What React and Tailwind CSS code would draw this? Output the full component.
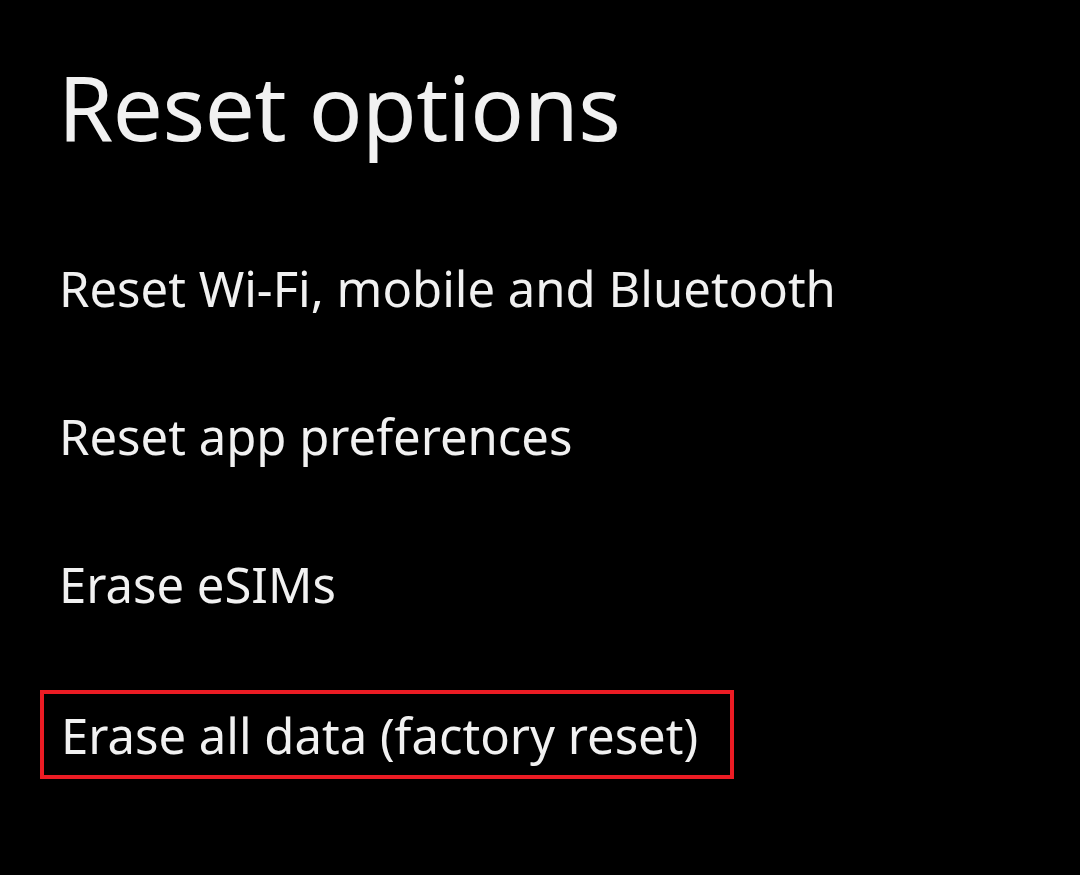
import React from 'react'

const items = [
  'Reset Wi-Fi, mobile and Bluetooth',
  'Reset app preferences',
  'Erase eSIMs',
]

export default function App() {
  return (
    <div className="w-[1080px] h-[875px] bg-black text-[#f1f1f1] font-['Noto_Sans',sans-serif] overflow-hidden">
      <h1 className="pl-[58px] pt-[52px] text-[89px] leading-[110px] font-normal tracking-[-0.5px]">Reset options</h1>
      <div className="mt-[96px] flex flex-col">
        {items.map(t => (
          <div key={t} className="h-[148px] pl-[59px] text-[49px] leading-[60px] font-normal">
            {t}
          </div>
        ))}
        <div className="-mt-[12px] ml-[40px] w-[694px] h-[89px] border-4 border-[#ec1c24] pl-[17px] flex items-center text-[49px] leading-[60px] font-normal">
          Erase all data (factory reset)
        </div>
      </div>
    </div>
  )
}
